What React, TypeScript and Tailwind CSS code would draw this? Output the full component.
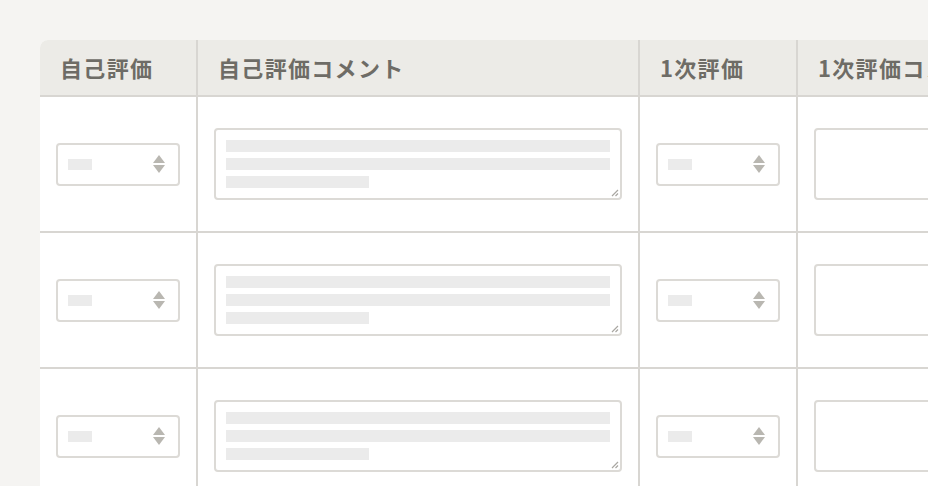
const rows = [0, 1, 2];

function SelectBox() {
  return (
    <div className="w-[124px] h-[43px] border-2 border-[#dcdad6] rounded-[4px] bg-white flex items-center justify-between pl-[10px] pr-[12px]">
      <div className="w-6 h-[11px] bg-[#ebebeb]" />
      <svg width="14" height="20" viewBox="0 0 14 20" className="shrink-0">
        <path d="M7 1 L13 9 L1 9 Z" fill="#b9b7b1" />
        <path d="M1 11 L13 11 L7 19 Z" fill="#b9b7b1" />
      </svg>
    </div>
  );
}

function CommentBox({ filled }: { filled: boolean }) {
  return (
    <div className="relative w-[408px] h-[72px] shrink-0 border-2 border-[#dcdad6] rounded-[4px] bg-white p-[10px] flex flex-col gap-[6px]">
      {filled && (
        <>
          <div className="h-3 w-full bg-[#ebebeb]" />
          <div className="h-3 w-full bg-[#ebebeb]" />
          <div className="h-3 w-[143px] bg-[#ebebeb]" />
          <svg width="8" height="8" viewBox="0 0 8 8" className="absolute right-[1px] bottom-[1px]">
            <path d="M7 1 L1 7 M7 4.5 L4.5 7" stroke="#a9a7a2" strokeWidth="1.2" />
          </svg>
        </>
      )}
    </div>
  );
}

export default function App() {
  const headers = ['自己評価', '自己評価コメント', '1次評価', '1次評価コメント'];
  const widths = ['w-[158px]', 'w-[442px]', 'w-[158px]', 'w-[442px]'];

  return (
    <main
      className="w-[928px] h-[486px] overflow-hidden bg-[#f5f4f2] pt-10 pl-10"
      style={{ fontFamily: '"Noto Sans CJK JP", "Noto Sans", sans-serif' }}
    >
      <div className="w-[1400px] bg-white rounded-tl-[8px] overflow-hidden">
        {/* Header */}
        <div className="flex bg-[#ecebe7] border-b-2 border-[#d8d6d2] h-[57px]">
          {headers.map((h, i) => (
            <div
              key={h}
              className={`${widths[i]} shrink-0 border-r-2 border-[#d8d6d2] flex items-center px-5 text-[22px] tracking-[0.06em] font-semibold text-[#6e6c66]`}
            >
              {h}
            </div>
          ))}
        </div>

        {/* Rows */}
        {rows.map((r) => (
          <div key={r} className="flex h-[136px] border-b-2 border-[#d8d6d2]">
            <div className="w-[158px] shrink-0 border-r-2 border-[#d8d6d2] flex items-center px-4">
              <SelectBox />
            </div>
            <div className="w-[442px] shrink-0 border-r-2 border-[#d8d6d2] flex items-center px-4">
              <CommentBox filled />
            </div>
            <div className="w-[158px] shrink-0 border-r-2 border-[#d8d6d2] flex items-center px-4">
              <SelectBox />
            </div>
            <div className="w-[442px] shrink-0 border-r-2 border-[#d8d6d2] flex items-center px-4">
              <CommentBox filled={false} />
            </div>
          </div>
        ))}
      </div>
    </main>
  );
}
